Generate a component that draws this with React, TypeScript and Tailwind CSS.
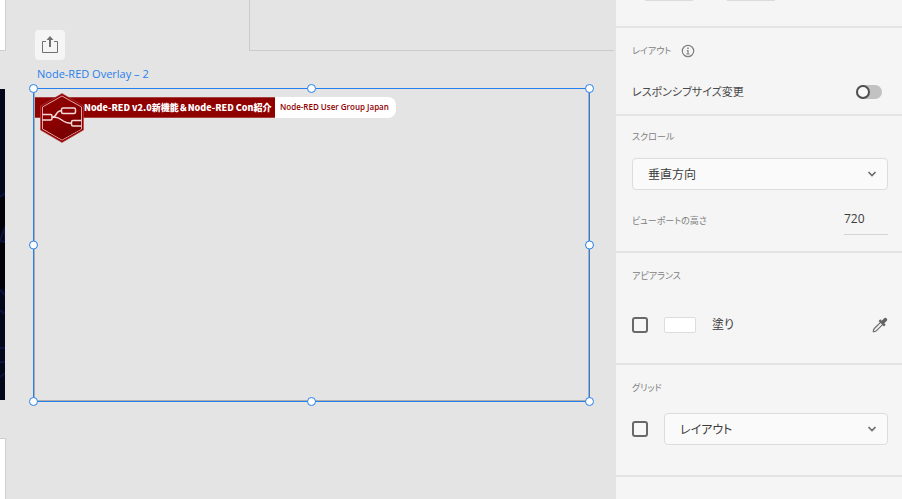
import type { ReactNode } from 'react'
import clsx from 'clsx'

const handles = [
  '-left-[5px] -top-[5px]',
  'left-1/2 -top-[5px] -translate-x-[5px]',
  '-right-[5px] -top-[5px]',
  '-left-[5px] top-1/2 -translate-y-1/2',
  '-right-[5px] top-1/2 -translate-y-1/2',
  '-left-[5px] -bottom-[5px]',
  'left-1/2 -bottom-[5px] -translate-x-[5px]',
  '-right-[5px] -bottom-[5px]',
]

function ShareIcon() {
  return (
    <svg viewBox="0 0 18 18" className="size-[18px]" fill="none" stroke="#707070" aria-hidden="true">
      <path d="M5 5.500H1.500V16.500H16.500V5.500H13" />
      <path d="M9 11V3" strokeWidth="2" />
      <path d="M9 0 12.500 4H5.500Z" fill="#707070" stroke="none" />
    </svg>
  )
}

function NodeRedLogo() {
  return (
    <svg viewBox="0 0 44 50" className="h-[50px] w-[44px]" role="img" aria-label="Node-RED">
      <defs>
        <linearGradient id="hex" x1="0" y1="0" x2="1" y2="1">
          <stop offset="0" stopColor="#9a0000" />
          <stop offset="1" stopColor="#6c0000" />
        </linearGradient>
      </defs>
      <path d="M22 0.500 43.500 13V37L22 49.500 0.500 37V13Z" fill="#960000" stroke="#b04646" strokeWidth="0.6" />
      <path d="M22 3 41.500 14V36L22 47 2.500 36V14Z" fill="#8b0000" stroke="#e0a8a8" strokeWidth="1" />
      <path d="M3 31 41 20V36L22 46.500 9 39Z" fill="url(#hex)" />
      <g fill="none" stroke="#f5dada" strokeWidth="1.500">
        <path d="M2.500 21.500H10.500Q12 21.500 12 23V25.500Q12 27 10.500 27H2.500" />
        <rect x="21.500" y="15" width="14" height="5.500" rx="1.500" />
        <path d="M41.500 27.500H33Q31.500 27.500 31.500 29V31.500Q31.500 33 33 33H41.500" />
        <path d="M12 24.200C18 24.200 14.500 17.800 21.500 17.800M12 24.200H15C22 24.200 21 30.200 31.500 30.200" />
      </g>
    </svg>
  )
}

function EyedropperIcon() {
  return (
    <svg viewBox="0 0 16 16" className="size-4" aria-hidden="true">
      <path d="M8.700 5.200 2.400 11.500Q1.200 12.700 1.300 14.700Q3.300 14.800 4.500 13.600L10.800 7.300" fill="none" stroke="#6e6e6e" strokeWidth="1.200" />
      <path d="M6.600 4 8.300 2.300 9.700 3.700 12 1.400C12.800.6 14 .7 14.700 1.400S15.400 3.200 14.600 4L12.300 6.300 13.700 7.700 12 9.400Z" fill="#636363" />
    </svg>
  )
}

function Section({ title, info, className, children }: { title: string; info?: boolean; className: string; children: ReactNode }) {
  return (
    <section className={clsx('border-b-2 border-[#e4e4e4] pl-4 pr-[14px]', className)}>
      <h2 className="flex h-[18px] items-center gap-2 text-[9px] text-[#808080]">
        {title}
        {info && (
          <svg viewBox="0 0 14 14" className="ml-0.5 size-[14px]" fill="none" stroke="#808080" aria-hidden="true">
            <circle cx="7" cy="7" r="5.700" strokeWidth="1.200" />
            <path d="M7 3.400V5" strokeWidth="1.500" />
            <path d="M5.800 6.500H7V10M5.500 10H8.500" strokeWidth="1.200" />
          </svg>
        )}
      </h2>
      {children}
    </section>
  )
}

function Dropdown({ label, value }: { label: string; value: string }) {
  return (
    <div className="relative min-w-0 flex-1">
      <select
        aria-label={label}
        className="h-8 w-full appearance-none rounded-[4px] border border-[#dcdcdc] bg-[#fafafa] pl-[15px] pr-8 pt-0.5 text-[12px] text-[#3c3c3c]"
      >
        <option>{value}</option>
      </select>
      <svg viewBox="0 0 10 6" className="pointer-events-none absolute right-[11px] top-[13px] h-[6px] w-[10px]" fill="none" stroke="#6a6a6a" strokeWidth="1.600" aria-hidden="true">
        <path d="M1.500 1 5 4.500 8.500 1" />
      </svg>
    </div>
  )
}

function Checkbox({ label }: { label: string }) {
  return (
    <input
      type="checkbox"
      aria-label={label}
      className="size-4 shrink-0 appearance-none rounded-[3px] border-2 border-[#696969] bg-[#f8f8f8] checked:bg-[#696969]"
    />
  )
}

function Canvas() {
  return (
    <main className="relative min-w-0 flex-1 overflow-hidden bg-[#e4e4e4]">
      {/* neighbouring artboards */}
      <div className="absolute left-0 top-0 h-[51px] w-[6px] border-b border-r border-[#cfcfcf] bg-white" />
      <div className="absolute -top-px left-[249px] right-[2px] h-[52px] border-b border-l border-[#cbcbcb]" />
      <div className="absolute left-0 top-[438px] h-[314px] w-[6px] border-r border-t border-[#cfcfcf] bg-white" />
      <svg viewBox="0 0 5 311" className="absolute left-0 top-[89px] h-[311px] w-[5px]" fill="none" stroke="#0b1240" strokeWidth="2" aria-hidden="true">
        <rect width="5" height="311" fill="#04061a" stroke="none" />
        <path d="M0 108H5V200H0Z" fill="#030108" stroke="none" />
        <path d="M0 108 5 104M0 152 5 138V153ZM0 201 5 206M0 221 5 225M0 259H5M0 273H5M0 288 5 284" />
      </svg>

      <button type="button" aria-label="Share" className="absolute left-[35px] top-[30px] flex size-[30px] items-center justify-center rounded-[4px] bg-[#f5f5f5]">
        <ShareIcon />
      </button>
      <p className="absolute left-[37px] top-[66px] whitespace-nowrap font-['Open_Sans',sans-serif] text-[11px] leading-4 text-[#2680eb]">
        Node-RED Overlay – 2
      </p>

      <div className="absolute left-[33px] top-[88px] h-[314px] w-[557px] border border-[#2680eb]">
        <div className="h-full border-x border-b border-[#b0aca8] pt-2">
          <div className="flex h-[21px] items-stretch whitespace-nowrap">
            <div className="w-[240px] border-y border-[#a54040] bg-[#8f0000] pl-[49px] font-['Noto_Sans_CJK_JP',sans-serif] text-[9px] font-black leading-[19px] text-white [font-feature-settings:normal]">
              Node-RED v2.0新機能＆Node-RED Con紹介
            </div>
            <div className="w-[121px] rounded-r-[8px] bg-white pl-[5px] text-[8px] font-semibold leading-[20px] text-[#8f0000]">
              Node-RED User Group Japan
            </div>
          </div>
        </div>
        <div className="absolute left-[6px] top-1">
          <NodeRedLogo />
        </div>
        {handles.map((position) => (
          <span key={position} className={clsx('absolute size-[9px] rounded-full border border-[#2680eb] bg-white', position)} />
        ))}
      </div>
    </main>
  )
}

export default function App() {
  return (
    <div className="flex min-h-screen bg-[#f5f5f5] font-['Open_Sans','Noto_Sans_CJK_JP',sans-serif] text-[12px] text-[#4a4a4a] [font-feature-settings:'palt']">
      <Canvas />
      <aside className="w-[286px] shrink-0">
        <div className="flex h-7 gap-[34px] border-b-2 border-[#e4e4e4] pl-[29px]">
          <span className="h-px w-12 bg-[#dcdcdc]" />
          <span className="h-px w-12 bg-[#dcdcdc]" />
        </div>

        <Section title="レイアウト" info className="pb-[11px] pt-[14px]">
          <label className="mt-[21px] flex h-[22px] items-center justify-between pr-[6px] text-[11px]">
            レスポンシブサイズ変更
            <span className="relative flex items-center">
              <input type="checkbox" role="switch" className="peer h-[14px] w-[26px] appearance-none rounded-full bg-[#c2c2c2] checked:bg-[#2680eb]" />
              <span className="pointer-events-none absolute left-0 size-[14px] rounded-full border-2 border-[#505050] bg-[#f8f8f8] peer-checked:left-3" />
            </span>
          </label>
        </Section>

        <Section title="スクロール" className="pb-4 pt-3">
          <div className="mt-3 flex">
            <Dropdown label="スクロール" value="垂直方向" />
          </div>
          <label className="mt-4 flex h-[29px] items-center justify-between text-[9px] text-[#808080]">
            ビューポートの高さ
            <input type="text" defaultValue="720" className="h-[29px] w-11 border-b border-[#d4d4d4] bg-transparent pb-1 text-[12px] text-[#3c3c3c]" />
          </label>
        </Section>

        <Section title="アピアランス" className="pb-[26px] pt-[14px]">
          <div className="mt-7 flex h-6 items-center gap-4">
            <Checkbox label="塗り" />
            <button type="button" aria-label="塗りのカラー" className="h-4 w-8 rounded-[2px] border border-[#dcdcdc] bg-white" />
            <span className="text-[#3c3c3c]">塗り</span>
            <button type="button" aria-label="スポイト" className="ml-auto">
              <EyedropperIcon />
            </button>
          </div>
        </Section>

        <Section title="グリッド" className="pb-[30px] pt-[14px]">
          <div className="mt-4 flex items-center gap-4">
            <Checkbox label="グリッド" />
            <Dropdown label="グリッドの種類" value="レイアウト" />
          </div>
        </Section>
      </aside>
    </div>
  )
}
